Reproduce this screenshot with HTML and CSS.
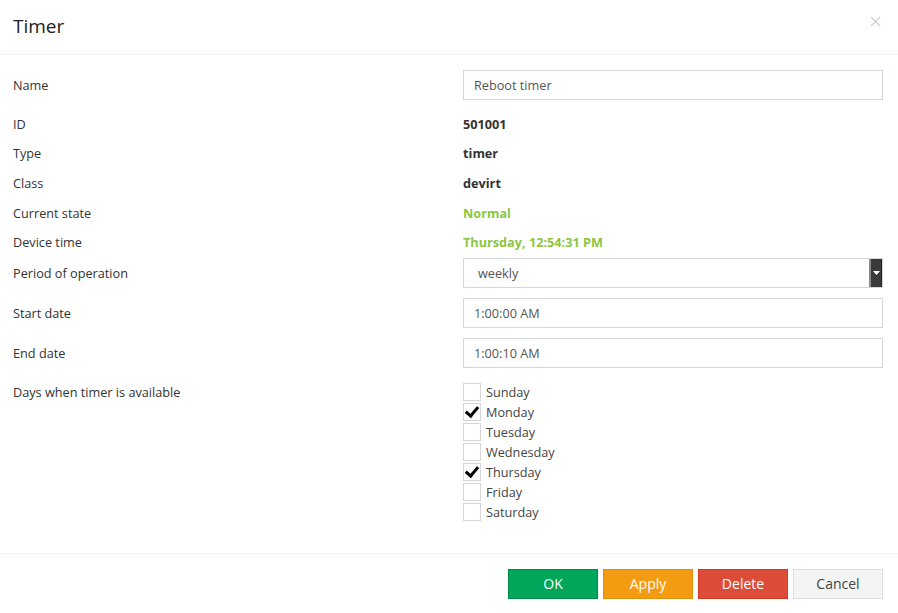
FILE: index.html
```html
<!DOCTYPE html>
<html>
  <head>
    <title>Timer</title>
    <link rel="stylesheet" href="styles.css">
  </head>
  <body>
    <div class="modal">
      <div class="modal-header">
        <h4 class="modal-title">Timer</h4>
        <button class="close" aria-label="Close">
          <svg width="11" height="11" viewBox="0 0 11 11">
            <path d="M1 1 L10 10 M10 1 L1 10" stroke="#cfcfcf" stroke-width="1.4" fill="none"/>
          </svg>
        </button>
      </div>

      <div class="modal-body">
        <div class="row row-field row-name">
          <span class="label">Name</span>
          <input type="text" class="input" value="Reboot timer" />
        </div>
        <div class="static-group">
          <div class="row row-static">
            <span class="label">ID</span>
            <span class="value">501001</span>
          </div>
          <div class="row row-static">
            <span class="label">Type</span>
            <span class="value">timer</span>
          </div>
          <div class="row row-static">
            <span class="label">Class</span>
            <span class="value">devirt</span>
          </div>
          <div class="row row-static">
            <span class="label">Current state</span>
            <span class="value value-green">Normal</span>
          </div>
          <div class="row row-static">
            <span class="label">Device time</span>
            <span class="value value-green">Thursday, 12:54:31 PM</span>
          </div>
        </div>
        <div class="row row-field">
          <span class="label">Period of operation</span>
          <div class="select">
            <span class="select-text">weekly</span>
            <span class="select-arrow">
              <svg width="7" height="4" viewBox="0 0 7 4"><path d="M0 0 L7 0 L3.5 4 Z" fill="#fff"/></svg>
            </span>
          </div>
        </div>
        <div class="row row-field">
          <span class="label">Start date</span>
          <input type="text" class="input" value="1:00:00 AM" />
        </div>
        <div class="row row-field">
          <span class="label">End date</span>
          <input type="text" class="input" value="1:00:10 AM" />
        </div>
        <div class="row row-days">
          <span class="label">Days when timer is available</span>
          <div class="days">
            <label class="day"><span class="box"></span>Sunday</label>
            <label class="day"><span class="box checked"></span>Monday</label>
            <label class="day"><span class="box"></span>Tuesday</label>
            <label class="day"><span class="box"></span>Wednesday</label>
            <label class="day"><span class="box checked"></span>Thursday</label>
            <label class="day"><span class="box"></span>Friday</label>
            <label class="day"><span class="box"></span>Saturday</label>
          </div>
        </div>
      </div>

      <div class="modal-footer">
        <button class="btn btn-ok">OK</button>
        <button class="btn btn-apply">Apply</button>
        <button class="btn btn-delete">Delete</button>
        <button class="btn btn-cancel">Cancel</button>
      </div>
    </div>
  </body>
</html>
```

FILE: styles.css
```css
body {
  margin: 0;
  background-color: #fff;
  font-family: "Open Sans", "Noto Sans", sans-serif;
  font-size: 12.7px;
  color: #333;
}

.modal {
  width: 898px;
}

.modal-header {
  height: 55px;
  border-bottom: 1px solid #eeeeee;
  display: flex;
  align-items: center;
  justify-content: space-between;
  padding: 0 15px 0 13px;
  box-sizing: border-box;
}

.modal-title {
  margin: 0 0 3px;
  font-size: 19px;
  font-weight: 400;
  color: #222;
}

.close {
  border: none;
  background: none;
  padding: 0;
  margin: 0 2px 12px 0;
  cursor: pointer;
  display: flex;
}

.modal-body {
  padding: 15px 15px 31px 13px;
}

.row {
  display: grid;
  grid-template-columns: 450px 1fr;
  align-items: center;
}

.row-field {
  margin-bottom: 10px;
}

.row-name {
  margin-bottom: 9px;
}

.static-group {
  margin-bottom: 1px;
}

.row-static {
  height: 29.6px;
}

.value {
  font-weight: 700;
}

.value-green {
  color: #8cc63f;
}

.input {
  height: 30px;
  box-sizing: border-box;
  border: 1px solid #d2d6de;
  padding: 0 10px;
  font-family: inherit;
  font-size: 12.7px;
  color: #555;
  outline: none;
  width: 100%;
}

.select {
  height: 30px;
  box-sizing: border-box;
  border: 1px solid #d2d6de;
  display: flex;
  align-items: center;
  justify-content: space-between;
  color: #555;
}

.select-text {
  padding-left: 14px;
}

.select-arrow {
  width: 10px;
  height: 28px;
  background-color: #3a3a3a;
  border-left: 2px solid #8a8a8a;
  border-right: 1px solid #222;
  display: flex;
  align-items: center;
  justify-content: center;
}

.row-days {
  align-items: start;
  padding-top: 4px;
}

.row-days .label {
  line-height: 20px;
}

.days {
  display: flex;
  flex-direction: column;
}

.day {
  display: flex;
  align-items: center;
  height: 20px;
  color: #444;
}

.box {
  width: 16px;
  height: 16px;
  border: 1px solid #d7d7d7;
  margin-right: 5px;
  position: relative;
}

.box.checked::after {
  content: "";
  position: absolute;
  left: 4px;
  top: 0px;
  width: 5px;
  height: 10px;
  border: solid #000;
  border-width: 0 3px 3px 0;
  transform: rotate(40deg);
}

.modal-footer {
  border-top: 1px solid #eeeeee;
  padding: 15px;
  display: flex;
  justify-content: flex-end;
  gap: 5px;
}

.btn {
  width: 90px;
  height: 30px;
  border: 1px solid transparent;
  font-family: inherit;
  font-size: 14px;
  color: #fff;
  cursor: pointer;
}

.btn-ok {
  background-color: #00a65a;
  border-color: #008d4c;
}

.btn-apply {
  background-color: #f39c12;
  border-color: #e08e0b;
}

.btn-delete {
  background-color: #dd4b39;
  border-color: #d73925;
}

.btn-cancel {
  background-color: #f4f4f4;
  border-color: #ddd;
  color: #444;
}
```
